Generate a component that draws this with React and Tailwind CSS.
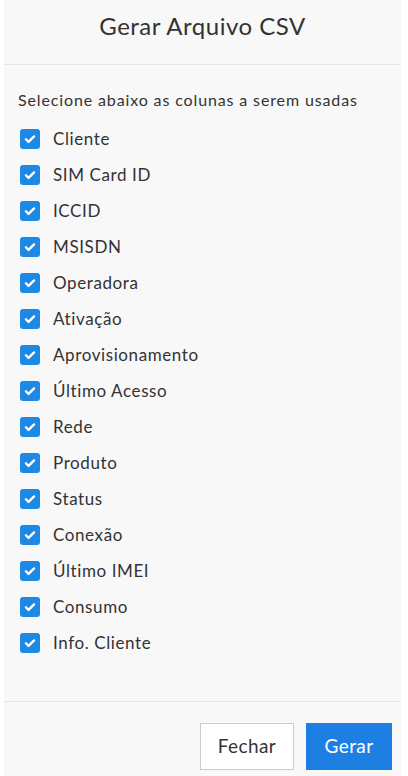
const COLUMNS = [
  "Cliente",
  "SIM Card ID",
  "ICCID",
  "MSISDN",
  "Operadora",
  "Ativação",
  "Aprovisionamento",
  "Último Acesso",
  "Rede",
  "Produto",
  "Status",
  "Conexão",
  "Último IMEI",
  "Consumo",
  "Info. Cliente",
];

function Check() {
  return (
    <span className="flex h-[20px] w-[20px] shrink-0 items-center justify-center rounded-[3px] bg-[#1e88e5]">
      <svg viewBox="0 0 24 24" className="h-[14px] w-[14px]" fill="none" stroke="white" strokeWidth="4" strokeLinecap="round" strokeLinejoin="round">
        <path d="M5 12.5l4.5 4.5L19 7.5" />
      </svg>
    </span>
  );
}

export default function App() {
  return (
    <div className="h-[776px] w-full bg-white font-['Lato',sans-serif] text-[#333]">
      <div className="ml-[4px] flex h-full w-[397px] flex-col bg-[#f8f8f8]">
        {/* Header */}
        <div className="h-[65px] border-b border-[#e5e5e5] pt-[11px] text-center text-[24px] leading-[30px] tracking-[0.5px] text-[#333]">
          Gerar Arquivo CSV
        </div>

        {/* Body */}
        <div className="flex-1 px-[14px] pt-[24px]">
          <p className="text-[16px] leading-[22px] tracking-[0.87px]">Selecione abaixo as colunas a serem usadas</p>
          <ul className="mt-[10px]">
            {COLUMNS.map((c) => (
              <li key={c} className="flex h-[36px] items-center gap-[13px] pl-[2px] text-[17px] tracking-[0.6px]">
                <Check />
                <span>{c}</span>
              </li>
            ))}
          </ul>
        </div>

        {/* Footer */}
        <div className="flex h-[75px] justify-end gap-[12px] border-t border-[#e5e5e5] pr-[9px] pt-[21px]">
          <button className="h-[47px] w-[94px] border border-[#ccc] bg-white text-[19px] tracking-[0.4px] text-[#333]">Fechar</button>
          <button className="h-[47px] w-[86px] bg-[#1e7fe3] text-[19px] tracking-[0.4px] text-white">Gerar</button>
        </div>
      </div>
    </div>
  );
}
